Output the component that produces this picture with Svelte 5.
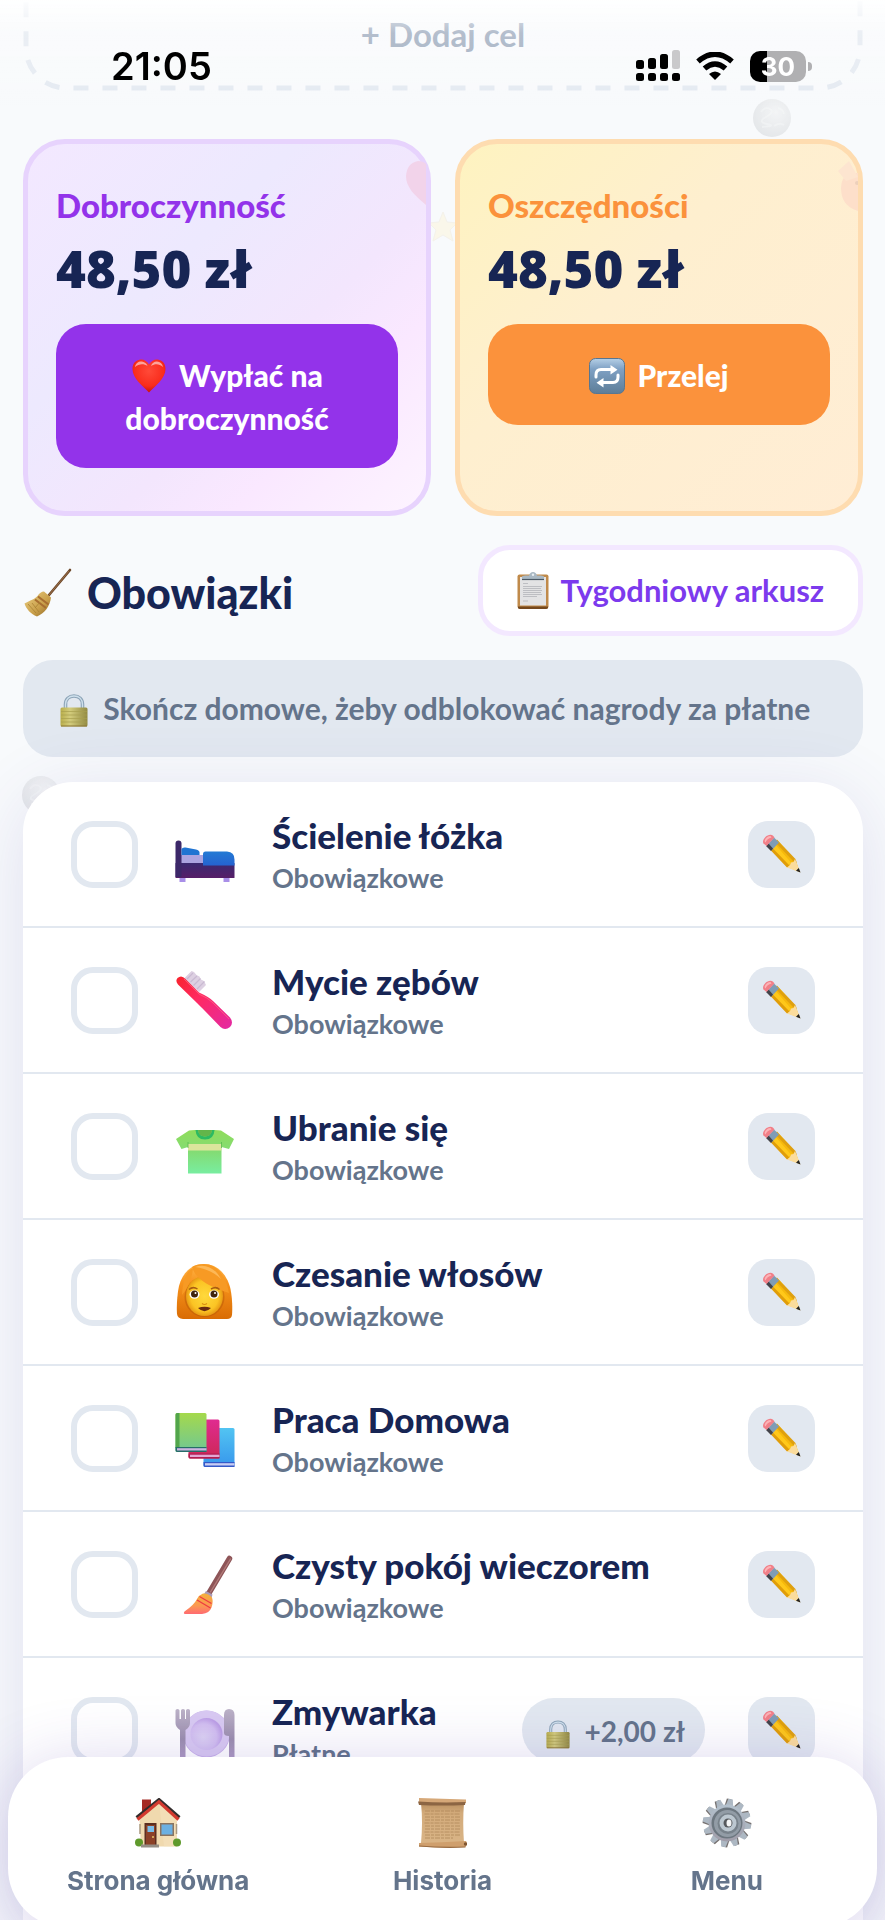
<script>
  const savings = [
    {
      kind: "charity",
      title: "Dobroczynność",
      amount: "48,50 zł",
      icon: "heart",
      action: "Wypłać na dobroczynność",
    },
    {
      kind: "saving",
      title: "Oszczędności",
      amount: "48,50 zł",
      icon: "repeat",
      action: "Przelej",
    },
  ];

  let chores = [
    { icon: "bed", name: "Ścielenie łóżka", type: "Obowiązkowe", done: false },
    { icon: "toothbrush", name: "Mycie zębów", type: "Obowiązkowe", done: false },
    { icon: "shirt", name: "Ubranie się", type: "Obowiązkowe", done: false },
    { icon: "woman", name: "Czesanie włosów", type: "Obowiązkowe", done: false },
    { icon: "books", name: "Praca Domowa", type: "Obowiązkowe", done: false },
    { icon: "brush", name: "Czysty pokój wieczorem", type: "Obowiązkowe", done: false },
    { icon: "plate", name: "Zmywarka", type: "Płatne", reward: "+2,00 zł", done: false },
  ];

  const tabs = [
    { icon: "house", label: "Strona główna" },
    { icon: "scroll", label: "Historia" },
    { icon: "gear", label: "Menu" },
  ];

  // Angles of the gear teeth
  const teeth = Array.from({ length: 12 }, (_, i) => i * 30 + 8);
</script>

<!-- Gradients shared by the icons -->
<svg class="defs" aria-hidden="true">
  <defs>
    <radialGradient id="g-heart" cx="0.5" cy="0.35" r="0.65">
      <stop offset="0" stop-color="#ff4a38" />
      <stop offset="0.7" stop-color="#f92c1c" />
      <stop offset="1" stop-color="#c81408" />
    </radialGradient>
    <linearGradient id="g-repeat" x1="0" y1="0" x2="0" y2="1">
      <stop offset="0" stop-color="#b5cfe6" />
      <stop offset="0.3" stop-color="#7fa1c4" />
      <stop offset="1" stop-color="#5d7d98" />
    </linearGradient>
    <linearGradient id="g-lock" x1="0" y1="0" x2="1" y2="0">
      <stop offset="0" stop-color="#b9ae4a" />
      <stop offset="0.35" stop-color="#d3cc7c" />
      <stop offset="1" stop-color="#928a42" />
    </linearGradient>
    <linearGradient id="g-blanket" x1="0" y1="0" x2="0" y2="1">
      <stop offset="0" stop-color="#237ad4" />
      <stop offset="1" stop-color="#2563d0" />
    </linearGradient>
    <linearGradient id="g-frame" x1="0" y1="0" x2="0" y2="1">
      <stop offset="0" stop-color="#3a2a70" />
      <stop offset="1" stop-color="#571e68" />
    </linearGradient>
    <linearGradient id="g-tooth" x1="0" y1="0" x2="1" y2="1">
      <stop offset="0" stop-color="#f8232c" />
      <stop offset="0.4" stop-color="#ff2a62" />
      <stop offset="1" stop-color="#e32aa4" />
    </linearGradient>
    <linearGradient id="g-shirt" x1="0" y1="0" x2="0" y2="1">
      <stop offset="0" stop-color="#90dc5c" />
      <stop offset="0.5" stop-color="#83dc74" />
      <stop offset="1" stop-color="#78eda0" />
    </linearGradient>
    <linearGradient id="g-hair" x1="0" y1="0" x2="0" y2="1">
      <stop offset="0" stop-color="#ffb64a" />
      <stop offset="0.35" stop-color="#f7931c" />
      <stop offset="1" stop-color="#d96c04" />
    </linearGradient>
    <radialGradient id="g-face">
      <stop offset="0" stop-color="#ffd93c" />
      <stop offset="0.75" stop-color="#fbc424" />
      <stop offset="1" stop-color="#e89a14" />
    </radialGradient>
    <linearGradient id="g-book1" x1="0" y1="0" x2="0" y2="1">
      <stop offset="0" stop-color="#a5d94c" />
      <stop offset="1" stop-color="#6fc794" />
    </linearGradient>
    <linearGradient id="g-book2" x1="0" y1="0" x2="0" y2="1">
      <stop offset="0" stop-color="#e02b90" />
      <stop offset="1" stop-color="#cc2855" />
    </linearGradient>
    <linearGradient id="g-book3" x1="0" y1="0" x2="0" y2="1">
      <stop offset="0" stop-color="#52c4f2" />
      <stop offset="1" stop-color="#3796ec" />
    </linearGradient>
    <linearGradient id="g-brush" x1="0" y1="0" x2="0" y2="1">
      <stop offset="0" stop-color="#f5b03c" />
      <stop offset="0.6" stop-color="#fb9852" />
      <stop offset="1" stop-color="#ff6a72" />
    </linearGradient>
    <linearGradient id="g-steel" x1="0" y1="0" x2="0" y2="1">
      <stop offset="0" stop-color="#bdb3c8" />
      <stop offset="0.5" stop-color="#9c8fae" />
      <stop offset="1" stop-color="#b9a2cf" />
    </linearGradient>
    <radialGradient id="g-plate" cx="0.4" cy="0.6" r="0.6">
      <stop offset="0" stop-color="#ddd3f3" />
      <stop offset="0.7" stop-color="#d2bff0" />
      <stop offset="1" stop-color="#bda0e6" />
    </radialGradient>
    <linearGradient id="g-straw" x1="0" y1="0" x2="1" y2="1">
      <stop offset="0" stop-color="#ecd083" />
      <stop offset="0.6" stop-color="#c99f4a" />
      <stop offset="1" stop-color="#8d6524" />
    </linearGradient>
    <linearGradient id="g-paper" x1="0" y1="0" x2="0" y2="1">
      <stop offset="0" stop-color="#b98f60" />
      <stop offset="0.25" stop-color="#d3ab7b" />
      <stop offset="1" stop-color="#d9b486" />
    </linearGradient>
    <linearGradient id="g-gear" x1="0" y1="0" x2="0" y2="1">
      <stop offset="0" stop-color="#b4c2ce" />
      <stop offset="1" stop-color="#9f9ca8" />
    </linearGradient>
    <radialGradient id="g-moon" cx="0.6" cy="0.35" r="0.7">
      <stop offset="0" stop-color="#f2f3f4" />
      <stop offset="1" stop-color="#dcdfe2" />
    </radialGradient>
  </defs>
</svg>

{#snippet icon(name)}
  {#if name === "heart"}
    <svg class="icon" width="36" height="36" viewBox="0 0 36 36" aria-hidden="true">
      <path d="M18 34.500C12 28 1.500 20.500 1.500 11C1.500 5 5.500 1.500 10 1.500C13.500 1.500 16.500 3.500 18 6.500C19.500 3.500 22.500 1.500 26 1.500C30.500 1.500 34.500 5 34.500 11C34.500 20.500 24 28 18 34.500Z" fill="url(#g-heart)" />
      <path d="M4 9C4.500 5 8 3 11 3.500C14 4 16 6 16.500 8C13 5.500 8 5.500 4 9ZM20 8C21 5 23.500 3.300 26 3.500C29 3.700 31.500 5.500 32 9C28 5.500 24 5.500 20 8Z" fill="#fff" opacity="0.55" />
    </svg>
  {:else if name === "repeat"}
    <svg class="icon" width="36" height="36" viewBox="0 0 36 36" aria-hidden="true">
      <rect x="0.500" y="0.500" width="35" height="35" rx="6" fill="url(#g-repeat)" stroke="#587691" />
      <path d="M7 19V17Q7 11.500 12 11.500H22M29 17V19Q29 24.500 24 24.500H14" fill="none" stroke="#fff" stroke-width="3" stroke-linecap="round" />
      <path d="M21.500 7L28.500 11.800L21.500 16.500ZM14.500 20L7.500 24.700L14.500 29.500Z" fill="#fff" />
    </svg>
  {:else if name === "broom"}
    <svg width="50" height="50" viewBox="0 0 50 50" aria-hidden="true">
      <path d="M26 27L47 2" stroke="#6b4527" stroke-width="2.600" stroke-linecap="round" />
      <path d="M26 27L46 3" stroke="#a3774f" stroke-width="0.900" />
      <path d="M21 23.500L28 29.500C27 38 22 45 14 48.500C8 46 3 41 1.500 35.500C7 32.500 12 31 14.500 28C16.500 25 18.500 23.500 21 23.500Z" fill="url(#g-straw)" />
      <path d="M15 28.500L25.500 36.500M12 31.500L23 40" stroke="#a86e30" stroke-width="2.200" fill="none" />
      <path d="M5 36L13 45M9 35L16 44M17 34L12 40" stroke="#a98134" stroke-width="0.800" />
    </svg>
  {:else if name === "clipboard"}
    <svg class="icon" width="32" height="37" viewBox="0 0 32 37" aria-hidden="true">
      <rect x="0.500" y="2.500" width="31" height="34" rx="2" fill="#c08a4a" />
      <path d="M1 34.500H31V35.500Q31 37 29 37H3Q1 37 1 35.500Z" fill="#75481d" />
      <rect x="3" y="5" width="26" height="28.500" fill="#e3e3e4" />
      <path d="M6 11.500H11M6 14.500H25M6 16.500H24M6 18.500H25M6 20.500H24M6 22.500H25M6 24.500H20M6 29H11" stroke="#b9babd" stroke-width="0.900" />
      <path d="M5 7.500V5Q5 3.500 8 3.500H12Q13 0 16 0Q19 0 20 3.500H24Q27 3.500 27 5V7.500Z" fill="#a9b8c3" />
      <path d="M5 7.500H27" stroke="#4d5a66" stroke-width="1.200" />
      <circle cx="16" cy="2.800" r="1.200" fill="#e9eff3" />
    </svg>
  {:else if name === "lock"}
    <svg class="icon lock" viewBox="0 0 28 33" aria-hidden="true">
      <path d="M5.500 15V10.500C5.500 5 9 2 14 2S22.500 5 22.500 10.500V15" fill="none" stroke="#8ea5b8" stroke-width="3.600" />
      <path d="M5.500 15V10.500C5.500 5 9 2 14 2S22.500 5 22.500 10.500V15" fill="none" stroke="#cfe0ec" stroke-width="1.300" />
      <rect x="0.500" y="13.500" width="27" height="19" rx="1.500" fill="url(#g-lock)" />
      <path d="M1 17.500H27M1 21H27M1 24.500H27M1 28H27" stroke="#a79f4e" stroke-width="0.700" />
      <path d="M1 32H27" stroke="#8a7434" />
    </svg>
  {:else if name === "pencil"}
    <svg width="40" height="40" viewBox="0 0 40 40" aria-hidden="true">
      <path d="M9.500 11.500L15.500 6L33.500 25.500L38.500 38.500L26 33.500Z" transform="translate(-0.500 -0.500)" fill="#f6b90c" />
      <path d="M11.500 9.500L29 29.500L26 33.500L9 14Z" fill="#ffc81a" transform="translate(0 -1)" />
      <path d="M9 12.500L7 14.500L25 33.500L28 32L26 30Z" fill="#e09d09" />
      <path d="M15 6L33.500 25L35 29L31 27L13 8Z" fill="#d99a10" opacity="0.800" />
      <path d="M33 25L38.500 38.500L25 33.500L28 31L29 28.500L31.500 28Z" fill="#fbdc9c" />
      <path d="M36.800 34L38.500 38.500L34 36.700Z" fill="#222" />
      <path d="M4.500 11.500L12 3.500L17 8.500L9.500 16.500Z" fill="#7f9cb5" />
      <path d="M6.500 9.500L11 14.500L9 17L4 12Z" fill="#43434a" />
      <path d="M1.500 9.500C-0.500 6 4.500 0.500 8.500 0.700C10.500 0.800 12 2.500 12.500 3.500L4.500 12Z" fill="#f17f88" />
      <path d="M2.500 7C3.500 3.500 6 2 8.500 2L9.500 3.500C6.500 4 4.500 6 3.500 8.500Z" fill="#fcb3b6" />
    </svg>
  {:else if name === "bed"}
    <svg width="60" height="60" viewBox="0 -3 60 60" aria-hidden="true">
      <rect x="4.500" y="47" width="6" height="8" fill="#a98fe8" />
      <rect x="48.500" y="47" width="6" height="8" fill="#a98fe8" />
      <rect x="5" y="28" width="28" height="9" fill="#aba4e0" />
      <rect x="0.500" y="36" width="59" height="15" rx="0.500" fill="url(#g-frame)" />
      <path d="M0.500 50V16.500Q0.500 13.500 3.500 13.500Q6.500 13.500 6.500 16.500V50Z" fill="#3c2869" />
      <path d="M6.500 28V22Q7.500 20 10.500 20.500L21 22.500Q24.500 23.500 24.500 25.500V28Z" fill="#1f74d2" />
      <path d="M28 38.500V27Q28 24.500 30.500 24.500H52Q59.500 25 59.500 32.500V38.500Z" fill="url(#g-blanket)" />
    </svg>
  {:else if name === "toothbrush"}
    <svg width="60" height="60" viewBox="0 0 60 60" aria-hidden="true">
      <path d="M9 8.500L16.500 1L19 2L21.500 5L24.500 6.500L26 9.500L29 11L31 15L24 22Z" fill="#ddd0e2" />
      <path d="M12 9L18 3M15.500 12L22 6M18.500 15.500L25.500 8.500M22 19L29.500 11.500" stroke="#c9bad2" stroke-width="1.200" />
      <path d="M2.500 8Q6.500 4.500 10.500 9L24 22.500Q34 27 38 31L55 47.500Q59 52.500 55 57Q50 61 45.500 57L29 40Q27 38 22 33L3 14.500Q0 11 2.500 8Z" fill="url(#g-tooth)" />
      <path d="M9 9L24 24Q33 28 37 32L54 49" fill="none" stroke="#ff6a80" stroke-width="1" opacity="0.700" />
    </svg>
  {:else if name === "shirt"}
    <svg width="60" height="60" viewBox="0 -6 60 60" aria-hidden="true">
      <path d="M1 17L14 8.500Q16 8 20 8H39Q44 8 46 8.500L59 17L54 27L46.500 25V51.500H13V25L6.500 27Z" fill="url(#g-shirt)" />
      <path d="M13 22H46.500V28.500H13Z" fill="#dbe59c" />
      <path d="M20.500 8Q21 17.500 30 17.500T39.500 8H37Q36 14.500 30 14.500T23 8Z" fill="#2dba62" />
      <path d="M23 8Q23.500 14.500 30 14.500T37 8Z" fill="#63b54a" />
      <path d="M13 20V26M46.500 20V26" stroke="#58b850" stroke-width="0.800" />
    </svg>
  {:else if name === "woman"}
    <svg width="60" height="60" viewBox="0 0 60 60" aria-hidden="true">
      <path d="M29 2C42 2 52 12 55.500 27C57.500 37 57.500 47 57 53Q56.500 57 52 57H8Q2.500 56.500 2 52C1.500 45 2 33 4 24C7.500 11 16 2 29 2Z" fill="url(#g-hair)" />
      <ellipse cx="29.500" cy="35" rx="20" ry="20" fill="#b85a06" opacity="0.500" />
      <ellipse cx="29.500" cy="34" rx="18.500" ry="20" fill="url(#g-face)" />
      <path d="M18 6C17 17 13 26 7 33C8 18 11 9 18 6ZM17 5C21 19 37 25 54 31C51 14 42 2 29 2C24 2 20 3 17 5Z" fill="#f79a24" />
      <path d="M20 5C29 6 39 10 46 17C41 7 31 1 20 5Z" fill="#ffc56c" opacity="0.700" />
      <ellipse cx="19.500" cy="32.500" rx="5" ry="4.200" fill="#fff" />
      <ellipse cx="39" cy="32.500" rx="5" ry="4.200" fill="#fff" />
      <circle cx="19.500" cy="32" r="3.500" fill="#40240e" />
      <circle cx="39" cy="32" r="3.500" fill="#40240e" />
      <circle cx="20.500" cy="31" r="1" fill="#fff" />
      <circle cx="40" cy="31" r="1" fill="#fff" />
      <path d="M14 27.500Q18 24 22.500 27M36 27Q41 24 44.500 27.500" fill="none" stroke="#a95c12" stroke-width="1.500" />
      <path d="M27 41.500Q29.500 43.500 32 41.500" fill="none" stroke="#d98c10" stroke-width="1.200" />
      <path d="M23 46Q29.500 43.500 36 46Q29.500 52.500 23 46Z" fill="#6a2a10" />
    </svg>
  {:else if name === "books"}
    <svg width="60" height="60" viewBox="0 -2 60 60" aria-hidden="true">
      <rect x="28.500" y="18" width="31" height="39" rx="1.500" fill="url(#g-book3)" />
      <path d="M28.500 52H59.500V57H30Q28.500 57 28.500 55Z" fill="#3559c8" />
      <path d="M30 53.200H59.500V55.500H30Z" fill="#c9cdf4" />
      <rect x="13.500" y="9.500" width="31" height="39" rx="1.500" fill="url(#g-book2)" />
      <path d="M13.500 43.500H44.500V48.500H15Q13.500 48.500 13.500 46.500Z" fill="#b01c50" />
      <path d="M15 44.700H44.500V47H15Z" fill="#e3a7d3" />
      <rect x="0.500" y="3" width="31" height="39" rx="1.500" fill="url(#g-book1)" />
      <path d="M0.500 5Q0.500 3 2 3H4.500V38H0.500Z" fill="#52a54c" />
      <path d="M0.500 37H31.500V42H2Q0.500 42 0.500 40Z" fill="#266d69" />
      <path d="M2 38.200H31.500V40.500H2Z" fill="#cbb4e0" />
    </svg>
  {:else if name === "brush"}
    <svg width="60" height="60" viewBox="0 -1 60 60" aria-hidden="true">
      <path d="M34 38L54.500 3.500" stroke="#8e5558" stroke-width="5.500" stroke-linecap="round" />
      <path d="M35.500 37L55.500 4" stroke="#b27c7a" stroke-width="1.400" stroke-linecap="round" />
      <path d="M31 36L37.500 39.500L36.500 43L29 39Z" fill="#a99ab8" />
      <path d="M28 38.500Q33 38 37 42.500Q38.500 47 36.500 52.500Q34.500 58 27 59H10Q8 58.500 9.500 56.500Q19 50 22 44Q24 40 28 38.500Z" fill="url(#g-brush)" />
      <path d="M24.500 41.500L36.500 48.500M22 45L35.500 53" stroke="#ee3b42" stroke-width="1.300" />
    </svg>
  {:else if name === "plate"}
    <svg width="60" height="60" viewBox="0 -9 60 60" aria-hidden="true">
      <circle cx="31.500" cy="25" r="23.500" fill="#c9b3ea" />
      <circle cx="31.500" cy="24.500" r="23" fill="#d9caf2" />
      <circle cx="31.500" cy="25" r="16" fill="url(#g-plate)" />
      <path d="M0.500 1.500Q0.500 0 2.500 0T4.500 1.500V10H6V1.500Q6 0 8 0T10 1.500V10H11V1.500Q11 0 13 0T15 1.500V14Q15 18 10.500 21V60H5V21Q0.500 18 0.500 14Z" fill="url(#g-steel)" />
      <path d="M49 6Q49 0 54 0Q59.500 0 59.500 6V60H54V27Q49 27 49 24Z" fill="url(#g-steel)" />
    </svg>
  {:else if name === "house"}
    <svg width="48" height="50" viewBox="0 0 48 50" aria-hidden="true">
      <path d="M8 1.500H17V16H8Z" fill="#a52a24" />
      <path d="M5.500 22L25 4L43 22V48.500H7Z" fill="#f0d9ae" />
      <path d="M25 4L43 22V48.500H30Z" fill="#f6e3bf" opacity="0.500" />
      <circle cx="5" cy="44.500" r="4" fill="#5f9a2c" />
      <circle cx="43" cy="44.500" r="4" fill="#5f9a2c" />
      <path d="M2.500 19.500L25 1.500L45.500 19.500" fill="none" stroke="#322c2c" stroke-width="3" />
      <path d="M3.500 21.500L25 3.800L44.500 21.500" fill="none" stroke="#d33a2f" stroke-width="3.200" />
      <rect x="10.500" y="25" width="12" height="23" fill="#5c2e20" />
      <rect x="12" y="27" width="9" height="20" fill="#8c4127" />
      <rect x="13.500" y="28" width="6.500" height="6" fill="#7bbde8" />
      <circle cx="19" cy="39" r="1" fill="#e9c46a" />
      <rect x="26" y="25" width="14" height="13" fill="#8a7460" />
      <rect x="27.500" y="26.500" width="11" height="10" fill="#6cb0e2" />
      <path d="M7 48H25" stroke="#958d84" stroke-width="3" />
      <path d="M6 26V36M42.500 26V36" stroke="#a99880" stroke-width="1.500" />
    </svg>
  {:else if name === "scroll"}
    <svg width="50" height="50" viewBox="0 1 50 50" aria-hidden="true">
      <path d="M4 6H47Q45.500 25 47 46H4Q6 25 4 6Z" fill="url(#g-paper)" />
      <path d="M8 14H43M7.500 17H43.500M8 20H43M8 23H44M7.500 26H43M8 29H43.500M8 32H44M7.500 35H43M8 38H43.500M8 41H36" stroke="#b38c5f" stroke-width="0.900" stroke-dasharray="5 1 3 1" />
      <path d="M2 1Q25 1.500 49 2.500V6Q25 7.500 2 6Z" fill="#d6a878" />
      <path d="M1 4.500Q25 6 48.500 5L48 8Q25 9 2 8Z" fill="#8c6543" />
      <path d="M2 46Q25 45.500 49 44Q51 46.500 48.500 50Q25 51.500 2 49.500Z" fill="#cf9f6d" />
      <path d="M2 49Q25 51 48.500 50" fill="none" stroke="#986b42" stroke-width="1.200" />
      <circle cx="48.500" cy="47" r="1.700" fill="#805631" />
    </svg>
  {:else if name === "gear"}
    <svg width="50" height="50" viewBox="0 0 50 50" aria-hidden="true">
      {#each teeth as angle}
        <path d="M21 9L22.500 0.800H27L29 9Z" fill="#75706f" transform="rotate({angle} 25 25) translate(-1 0)" />
        <path d="M21 9L23 0.800H27.500L29 9Z" fill="#adb8c3" transform="rotate({angle} 25 25)" />
      {/each}
      <circle cx="25" cy="25" r="18.500" fill="url(#g-gear)" />
      <circle cx="25" cy="25" r="15.500" fill="#6d7780" />
      <circle cx="25.500" cy="25.500" r="13.500" fill="#929ca6" />
      <circle cx="26" cy="25.500" r="10.500" fill="#78828b" />
      <circle cx="26" cy="25" r="8.500" fill="#bcc7d0" />
      <circle cx="26" cy="25" r="4.500" fill="#56595d" />
      <ellipse cx="27" cy="25" rx="2.500" ry="3.500" fill="#f5f6f7" />
    </svg>
  {:else if name === "moon"}
    <svg width="40" height="40" viewBox="0 0 40 40" aria-hidden="true">
      <circle cx="20" cy="20" r="19" fill="url(#g-moon)" />
      <path d="M9 14Q13 8 18 11T14 19T15 26T10 29M26 10Q31 11 32 16M22 28Q28 24 32 27" fill="none" stroke="#f6f7f8" stroke-width="2" opacity="0.500" />
    </svg>
  {:else if name === "star"}
    <svg width="30" height="34" viewBox="0 0 30 34" aria-hidden="true">
      <path d="M15 2L19 12L29 13L22 20L25 31L15 25L5 31L8 20L1 13L11 12Z" fill="#fbf6e3" stroke="#f3efe4" />
    </svg>
  {/if}
{/snippet}

<div class="app">
  <div class="sky" aria-hidden="true">
    <span class="moon-top">{@render icon("moon")}</span>
    <span class="star">{@render icon("star")}</span>
    <span class="moon-left">{@render icon("moon")}</span>
  </div>

  <header class="status">
    <time>21:05</time>
    <div class="status-icons">
      <svg width="44" height="32" viewBox="0 0 44 32" aria-label="Zasięg">
        <rect x="0" y="10" width="8" height="9" rx="2.500" />
        <rect x="12" y="8" width="8" height="11" rx="2.500" />
        <rect x="24" y="4" width="8" height="15" rx="2.500" />
        <rect x="36" y="0" width="8" height="19" rx="2.500" fill="#c9c9cb" />
        <rect x="0" y="23" width="8" height="8" rx="2.500" />
        <rect x="12" y="23" width="8" height="8" rx="2.500" />
        <rect x="24" y="23" width="8" height="8" rx="2.500" />
        <rect x="36" y="23" width="8" height="8" rx="2.500" />
      </svg>
      <svg width="38" height="28" viewBox="0 0 38 28" aria-label="Wi-Fi">
        <path d="M2 9.500Q19 -5 36 9.500M8.500 16.500Q19 7.500 29.500 16.500" fill="none" stroke="#000" stroke-width="5.500" />
        <path d="M13 22Q19 17 25 22L19 28Z" />
      </svg>
      <span class="battery"><b>30</b></span>
    </div>
  </header>

  <button class="goal">
    <svg class="dashes" aria-hidden="true">
      <rect x="3" y="-150" rx="40" height="238" />
    </svg>
    + Dodaj cel
  </button>

  <section class="savings">
    {#each savings as item}
      <article class="card {item.kind}">
        {#if item.kind === "charity"}
          <svg class="ghost" width="20" height="46" viewBox="0 0 20 46" aria-hidden="true">
            <path d="M20 44C8 34 0 26 0 15Q1 2 12 0Q17 0 20 3Z" fill="#f2d3ea" />
          </svg>
        {:else}
          <svg class="ghost" width="20" height="50" viewBox="0 0 20 50" aria-hidden="true">
            <path d="M20 50Q3 45 3 27Q3 16 12 12H20Z" fill="#fddfca" />
            <path d="M0 10L11 0L20 16L8 20Z" fill="#fde5d0" />
            <circle cx="19" cy="22" r="2" fill="#ecd0bb" />
          </svg>
        {/if}
        <h3>{item.title}</h3>
        <p class="amount">{item.amount}</p>
        <button class="pay">{@render icon(item.icon)} {item.action}</button>
      </article>
    {/each}
  </section>

  <div class="heading">
    <h2>{@render icon("broom")} Obowiązki</h2>
    <button class="sheet">{@render icon("clipboard")} Tygodniowy arkusz</button>
  </div>

  <p class="notice">
    {@render icon("lock")}
    Skończ domowe, żeby odblokować nagrody za płatne
  </p>

  <ul class="chores">
    {#each chores as chore, i}
      <li>
        <input type="checkbox" id="chore-{i}" bind:checked={chore.done} />
        <span class="picture">{@render icon(chore.icon)}</span>
        <label for="chore-{i}">
          <strong>{chore.name}</strong>
          <small>{chore.type}</small>
        </label>
        {#if chore.reward}
          <span class="reward">{@render icon("lock")} {chore.reward}</span>
        {/if}
        <button class="edit" aria-label="Edytuj">{@render icon("pencil")}</button>
      </li>
    {/each}
  </ul>

  <nav>
    {#each tabs as tab}
      <a href="#{tab.icon}">
        {@render icon(tab.icon)}
        <span>{tab.label}</span>
      </a>
    {/each}
  </nav>
</div>

<style>
  :global(body) {
    margin: 0;
    background: #f8fafc;
  }

  .defs {
    position: absolute;
    width: 0;
    height: 0;
  }

  .app {
    position: relative;
    display: flex;
    flex-direction: column;
    box-sizing: border-box;
    min-height: 100vh;
    padding: 0 22px 0 23px;
    overflow: hidden;
    background: #f8fafc;
    color: #172554;
    font-family: Lato, "Open Sans", sans-serif;
  }

  button {
    font-family: inherit;
    cursor: pointer;
  }

  svg {
    flex: none;
  }

  .icon {
    margin-right: 5px;
    vertical-align: -7px;
  }

  /* Faint floating pictures behind the content */
  .sky span {
    position: absolute;
    opacity: 0.7;
  }

  .moon-top {
    top: 98px;
    right: 93px;
  }

  .star {
    top: 210px;
    left: 428px;
  }

  .sky .moon-left {
    top: 775px;
    left: 21px;
  }

  /* Phone status bar over the page */
  .status {
    position: fixed;
    top: 0;
    left: 0;
    right: 0;
    z-index: 2;
    display: flex;
    justify-content: space-between;
    align-items: flex-end;
    box-sizing: border-box;
    height: 110px;
    padding: 0 79px 28px 111px;
    background: linear-gradient(
      rgba(255, 255, 255, 0.9),
      rgba(255, 255, 255, 0.3) 30%,
      rgba(255, 255, 255, 0.2) 70%,
      rgba(255, 255, 255, 0)
    );
    color: #000;
    font-family: Inter, sans-serif;
    pointer-events: none;
  }

  .status time {
    font-size: 38px;
    line-height: 32px;
    font-weight: 600;
  }

  .status-icons {
    display: flex;
    align-items: center;
    gap: 16px;
  }

  .battery {
    position: relative;
    width: 56px;
    border-radius: 10px;
    background: linear-gradient(90deg, #000 30%, #b0b0b2 30%);
    color: #fff;
    font-size: 26px;
    line-height: 31px;
    text-align: center;
  }

  .battery b {
    font-weight: 700;
  }

  .battery::after {
    content: "";
    position: absolute;
    top: 11px;
    right: -6px;
    width: 4px;
    height: 9px;
    border-radius: 0 4px 4px 0;
    background: #b0b0b2;
  }

  .goal {
    position: relative;
    height: 91px;
    margin-bottom: 48px;
    padding: 0 0 24px;
    border: 0;
    background: none;
    color: #94a3b8;
    font-size: 33px;
    font-weight: 700;
  }

  .dashes {
    position: absolute;
    inset: 0;
    width: 100%;
    height: 100%;
  }

  .dashes rect {
    width: calc(100% - 6px);
    fill: none;
    stroke: #e2e8f0;
    stroke-width: 5px;
    stroke-dasharray: 15 14;
  }

  .savings {
    position: relative;
    display: grid;
    grid-template-columns: 1fr 1fr;
    gap: 24px;
    margin-bottom: 29px;
  }

  .card {
    position: relative;
    padding: 28px 28px 43px;
    border: 5px solid #e7d3fd;
    border-radius: 42px;
    background: linear-gradient(135deg, #f3e8ff, #ede9fe 35%, #f3e6fd 60%, #fae8ff 75%, #fdf4ff);
  }

  .saving {
    border-color: #fedcb0;
    background: linear-gradient(135deg, #fef3c0, #feefcf 40%, #ffedd5);
  }

  .ghost {
    position: absolute;
    top: 17px;
    right: 0;
  }

  .card h3 {
    margin: 0;
    color: #9333ea;
    font-size: 33px;
    line-height: 66px;
    font-weight: 900;
  }

  .card.saving h3 {
    color: #fb923c;
  }

  .amount {
    margin: 0 0 26px;
    font-family: "Open Sans", sans-serif;
    font-size: 51px;
    line-height: 60px;
    font-weight: 800;
  }

  .pay {
    width: 100%;
    padding: 30px 29px 28px;
    border: 0;
    border-radius: 30px;
    background: #9333ea;
    color: #fff;
    font-size: 30px;
    line-height: 43px;
    font-weight: 900;
  }

  .saving .pay {
    background: #fb923c;
  }

  .heading {
    display: flex;
    justify-content: space-between;
    align-items: center;
    margin-bottom: 24px;
  }

  .heading h2 {
    display: flex;
    align-items: center;
    gap: 14px;
    margin: 0;
    padding-top: 4px;
    font-size: 43px;
    font-weight: 900;
  }

  .sheet {
    padding: 0 34px;
    border: 5px solid #f3e8ff;
    border-radius: 32px;
    background: #fff;
    color: #7c3aed;
    font-size: 31px;
    line-height: 81px;
    font-weight: 700;
  }

  .notice {
    margin: 0 0 25px;
    padding: 0 37px;
    border-radius: 30px;
    background: #e2e8f0;
    color: #64748b;
    font-size: 30px;
    line-height: 97px;
    font-weight: 700;
  }

  .lock {
    width: 28px;
    height: 33px;
    margin-right: 8px;
  }

  .chores {
    position: relative;
    flex: 1;
    margin: 0;
    padding: 0;
    border-radius: 50px 50px 0 0;
    background: #fff;
    box-shadow: 0 12px 72px rgba(76, 61, 160, 0.14);
    list-style: none;
  }

  .chores li {
    display: flex;
    align-items: center;
    box-sizing: border-box;
    height: 146px;
    padding: 0 48px;
    border-bottom: 2px solid #e2e8f0;
  }

  .chores input {
    appearance: none;
    flex: none;
    width: 67px;
    height: 67px;
    margin: 0;
    border: 6px solid #e2e8f0;
    border-radius: 22px;
    background: #fff;
  }

  .chores input:checked {
    background: #9333ea;
  }

  .picture {
    display: flex;
    width: 60px;
    margin: 0 37px;
  }

  .chores label {
    flex: 1;
    display: flex;
    flex-direction: column;
    padding-top: 2px;
  }

  .chores strong {
    font-size: 35px;
    line-height: 46px;
    font-weight: 900;
  }

  .chores small {
    color: #64748b;
    font-size: 27px;
    line-height: 40px;
    font-weight: 700;
  }

  .reward {
    margin-right: 43px;
    padding: 2px 20px 0 24px;
    border-radius: 33px;
    background: #e2e8f0;
    color: #64748b;
    font-size: 28px;
    line-height: 62px;
    font-weight: 700;
  }

  .reward :global(.lock) {
    width: 24px;
    height: 29px;
  }

  .edit {
    display: flex;
    justify-content: center;
    align-items: center;
    width: 67px;
    height: 67px;
    padding: 0;
    border: 0;
    border-radius: 20px;
    background: #e2e8f0;
  }

  nav {
    position: fixed;
    left: 8px;
    right: 8px;
    bottom: -8px;
    z-index: 1;
    display: grid;
    grid-template-columns: repeat(3, 1fr);
    box-sizing: border-box;
    height: 171px;
    padding: 41px 8px 0;
    border-radius: 60px;
    background: #fff;
    box-shadow: 0 10px 70px rgba(76, 50, 170, 0.23);
  }

  nav a {
    display: flex;
    flex-direction: column;
    align-items: center;
    gap: 17px;
    color: #64748b;
    font-family: Inter, sans-serif;
    font-size: 26px;
    line-height: 32px;
    font-weight: 700;
    text-decoration: none;
  }
</style>
